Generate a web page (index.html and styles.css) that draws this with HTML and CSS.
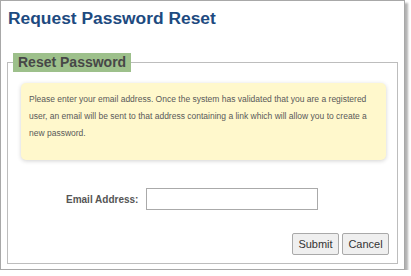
FILE: index.html
```html
<!DOCTYPE html>
<html lang="en">
<head>
    <meta charset="UTF-8">
    <meta name="viewport" content="width=device-width, initial-scale=1.0">
    <title>Request Password Reset</title>
    <link rel="stylesheet" href="styles.css">
</head>
<body>
    <div class="frame">
        <h1 class="page-title">Request Password Reset</h1>
        <form class="reset-form">
            <fieldset class="reset-box">
                <legend>Reset Password</legend>
                <div class="notice">
                    Please enter your email address. Once the system has validated that you are a registered user, an email will be sent to that address containing a link which will allow you to create a new password.
                </div>
                <div class="field-row">
                    <label for="email">Email Address:</label>
                    <input type="text" id="email" class="text-input">
                </div>
                <div class="actions">
                    <button type="submit" class="btn">Submit</button>
                    <button type="button" class="btn">Cancel</button>
                </div>
            </fieldset>
        </form>
    </div>
</body>
</html>
```

FILE: styles.css
```css
body {
    margin: 0;
    background-color: #fff;
    font-family: "Liberation Sans", Arial, sans-serif;
}

.frame {
    width: 405px;
    height: 270px;
    box-sizing: border-box;
    border: 1px solid #a8a8a8;
    box-shadow: 3px 3px 2px rgba(0, 0, 0, 0.3);
    padding: 0 6px;
}

.page-title {
    margin: 7px 0 0 1px;
    font-size: 17.4px;
    line-height: 20px;
    font-weight: bold;
    color: #1d4a80;
}

.reset-form {
    margin: 0;
}

.reset-box {
    margin: 25px 0 0 0;
    padding: 0 0 8px 0;
    border: 1px solid #bdbdbd;
    min-width: 0;
}

.reset-box legend {
    margin-left: 5px;
    padding: 0 5px;
    background-color: #9dc08b;
    color: #474747;
    font-size: 14px;
    font-weight: bold;
    line-height: 19px;
}

.notice {
    margin: 11px 11px 0 13px;
    padding: 8px 8px 18px 8px;
    background-color: #fff8cc;
    border-radius: 5px;
    box-shadow: 0 1px 4px rgba(0, 0, 0, 0.18);
    color: #595959;
    font-size: 8.5px;
    line-height: 17px;
}

.field-row {
    display: flex;
    align-items: center;
    gap: 8px;
    margin-top: 28px;
    padding-left: 58px;
}

.field-row label {
    color: #555;
    font-size: 10px;
    font-weight: bold;
}

.text-input {
    width: 172px;
    height: 22px;
    box-sizing: border-box;
    border: 1px solid #aaa;
    margin: 0;
    padding: 2px 4px;
}

.actions {
    display: flex;
    justify-content: flex-end;
    gap: 3px;
    margin-top: 23px;
    padding-right: 8px;
}

.btn {
    width: 47px;
    height: 22px;
    margin: 0;
    padding: 0;
    background-color: #efefef;
    border: 1px solid #a9a9a9;
    border-radius: 2px;
    color: #333;
    font-family: "Liberation Sans", Arial, sans-serif;
    font-size: 11px;
}
```
